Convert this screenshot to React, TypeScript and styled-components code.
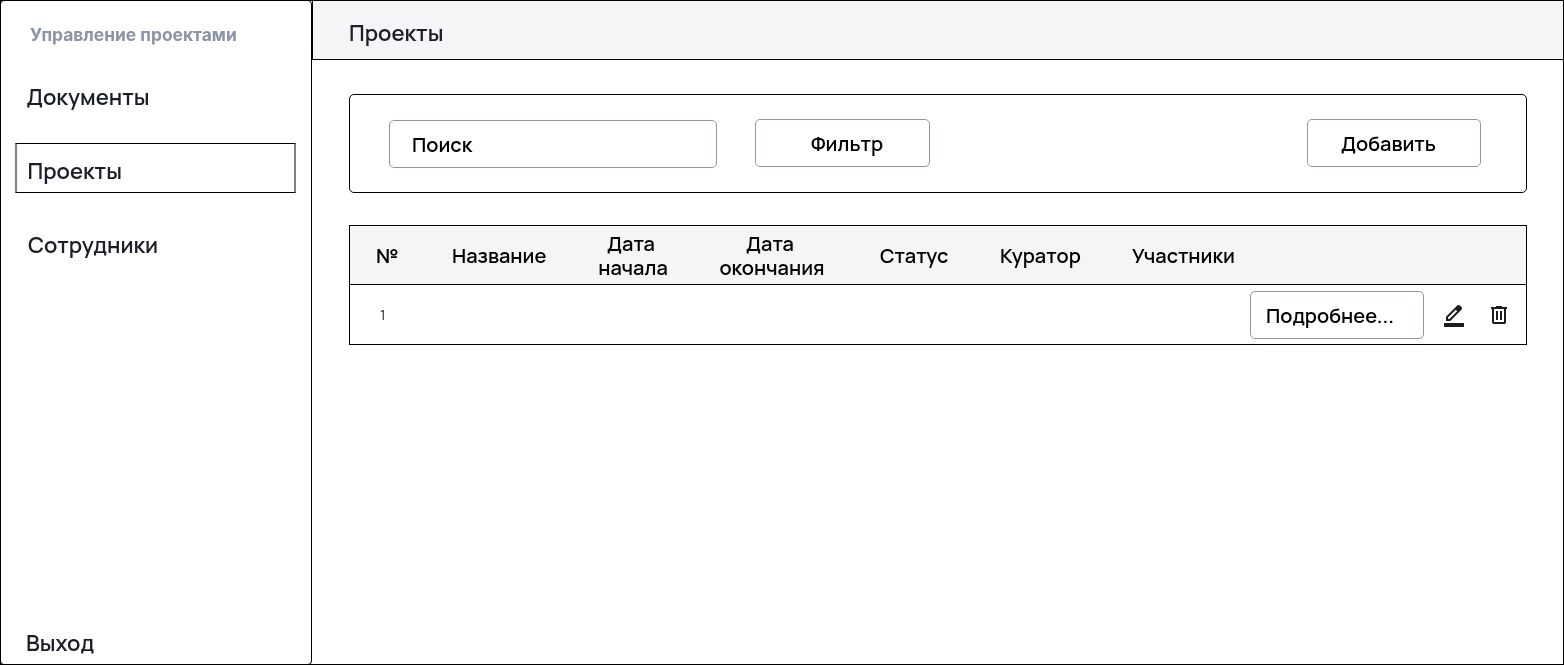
import React from "react";
import styled, { createGlobalStyle } from "styled-components";

const GlobalStyle = createGlobalStyle`
  * { box-sizing: border-box; }
  body {
    margin: 0;
    background: #fff;
    font-family: Manrope, Inter, "Liberation Sans", sans-serif;
    font-weight: 600;
  }
`;

const Frame = styled.div`
  display: flex;
  width: 1564px;
  height: 665px;
  box-shadow: inset 0 0 0 1px #000;
  overflow: hidden;
  will-change: transform;
`;

const Sidebar = styled.aside`
  display: flex;
  flex-direction: column;
  width: 312px;
  padding: 22px 14px 6px;
  border: 1px solid #000;
  border-radius: 4px;
`;

const Brand = styled.div`
  margin: 0 0 38px 15px;
  font: 700 17.4px/24px Inter, sans-serif;
  color: #8b94a6;
  white-space: nowrap;
`;

const Text = styled.span`
  white-space: nowrap;
`;

const NavItem = styled.a<{ $active?: boolean; $indent: number }>`
  display: flex;
  align-items: center;
  width: 281px;
  height: 50px;
  margin-bottom: 24px;
  padding: 5px 0 0 ${(p) => p.$indent}px;
  border-style: solid;
  border-width: 1px 2px;
  border-color: ${(p) => (p.$active ? "#000 #808080" : "transparent")};
  font-size: 22px;
  line-height: 30px;
  color: #1b1d27;
`;

const Nav = styled.nav`
  display: flex;
  flex-direction: column;
  margin-top: -16px;
`;

const Logout = styled(NavItem)`
  height: 30px;
  margin: auto 0 0;
  padding-top: 0;
`;

const Main = styled.main`
  display: flex;
  flex-direction: column;
  flex: 1;
`;

const Header = styled.header`
  height: 60px;
  padding: 17px 0 0 36px;
  border: 1px solid #000;
  background: #f4f5f7;
  font-size: 22px;
  line-height: 30px;
  color: #1b1d27;
`;

const Content = styled.section`
  display: flex;
  flex-direction: column;
  gap: 32px;
  padding: 34px 37px 0;
`;

const Toolbar = styled.div`
  display: flex;
  align-items: flex-start;
  height: 99px;
  padding: 24px 45px 0 39px;
  border: 1px solid #000;
  border-radius: 5px;
`;

const Field = styled.button<{ $width: number; $indent: number }>`
  display: flex;
  align-items: center;
  width: ${(p) => p.$width}px;
  height: 48px;
  padding: 2px 0 0 ${(p) => p.$indent}px;
  border: 1px solid #8e97a8;
  border-radius: 5px;
  background: #fff;
  font: inherit;
  font-size: 20px;
  line-height: 24px;
  color: #000;
`;

const SearchField = styled(Field)`
  margin: 1px 38px 0 0;
`;

const AddButton = styled(Field)`
  margin-left: auto;
`;

const Table = styled.div`
  border: 1px solid #000;
`;

const HeadRow = styled.div`
  display: flex;
  align-items: center;
  height: 59px;
  padding: 2px 0 0 26px;
  border-bottom: 1px solid #000;
  background: #f4f5f7;
  font-size: 20px;
  line-height: 24px;
  color: #000;
`;

const HeadCell = styled.div<{ $width: number }>`
  width: ${(p) => p.$width}px;
`;

const StackedCell = styled(HeadCell)<{ $text: number }>`
  display: flex;
  flex-direction: column;
  align-items: center;
  padding-right: ${(p) => p.$width - p.$text}px;

  span:first-child {
    margin-right: 4px;
  }
`;

const Row = styled.div`
  display: flex;
  align-items: center;
  height: 59px;
  padding: 0 15px 0 30px;
`;

const RowNumber = styled.span`
  font-size: 14px;
  font-weight: 400;
  color: #222;
`;

const DetailsButton = styled(Field)`
  margin-left: auto;
`;

const IconButton = styled.button<{ $gap: number }>`
  display: flex;
  margin: 0 0 0 ${(p) => p.$gap}px;
  padding: 0;
  border: 0;
  background: none;
  color: #1c1b1f;
`;

const Icon = ({ path }: { path: string }) => (
  <svg width="24" height="24" viewBox="0 -960 960 960" fill="currentColor">
    <path d={path} />
  </svg>
);

const EDIT =
  "M80 0v-160h800V0H80Zm160-320h56l312-311-29-29-28-28-311 312v56Zm-80 80v-170l448-447q11-11 25.5-17t30.5-6q16 0 31 6t27 18l55 56q12 11 17.5 26t5.5 31q0 15-5.5 29.5T777-687L330-240H160Z";
const TRASH =
  "M280-120q-33 0-56.5-23.5T200-200v-520h-40v-80h200v-40h240v40h200v80h-40v520q0 33-23.5 56.5T680-120H280Zm400-600H280v520h400v-520ZM360-280h80v-360h-80v360Zm160 0h80v-360h-80v360Z";

export default function App() {
  return (
    <>
      <GlobalStyle />
      <Frame>
        <Sidebar>
          <Brand>Управление проектами</Brand>
          <Nav>
            <NavItem $indent={9.5}><Text>Документы</Text></NavItem>
            <NavItem $indent={10.5} $active><Text>Проекты</Text></NavItem>
            <NavItem $indent={11}><Text>Сотрудники</Text></NavItem>
          </Nav>
          <Logout $indent={9}><Text>Выход</Text></Logout>
        </Sidebar>
        <Main>
          <Header><Text>Проекты</Text></Header>
          <Content>
            <Toolbar>
              <SearchField $width={328} $indent={22}><Text>Поиск</Text></SearchField>
              <Field $width={175} $indent={55}><Text>Фильтр</Text></Field>
              <AddButton $width={174} $indent={33}><Text>Добавить</Text></AddButton>
            </Toolbar>
            <Table>
              <HeadRow>
                <HeadCell $width={76}><Text>№</Text></HeadCell>
                <HeadCell $width={146}><Text>Название</Text></HeadCell>
                <StackedCell $width={121} $text={70}>
                  <Text>Дата</Text>
                  <Text>начала</Text>
                </StackedCell>
                <StackedCell $width={161} $text={106}>
                  <Text>Дата</Text>
                  <Text>окончания</Text>
                </StackedCell>
                <HeadCell $width={120}><Text>Статус</Text></HeadCell>
                <HeadCell $width={132}><Text>Куратор</Text></HeadCell>
                <HeadCell $width={120}><Text>Участники</Text></HeadCell>
              </HeadRow>
              <Row>
                <RowNumber>1</RowNumber>
                <DetailsButton $width={174} $indent={15}><Text>Подробнее...</Text></DetailsButton>
                <IconButton $gap={18} aria-label="Редактировать"><Icon path={EDIT} /></IconButton>
                <IconButton $gap={21} aria-label="Удалить"><Icon path={TRASH} /></IconButton>
              </Row>
            </Table>
          </Content>
        </Main>
      </Frame>
    </>
  );
}
